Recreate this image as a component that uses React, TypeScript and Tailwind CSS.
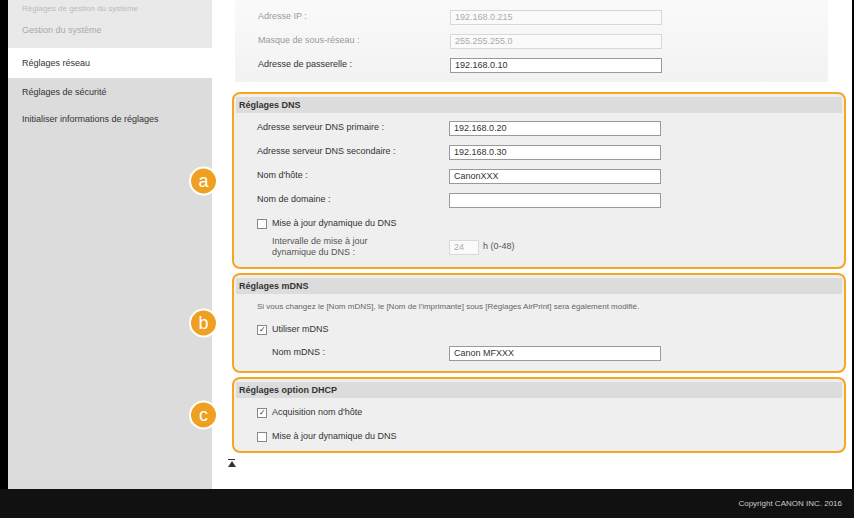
import React from 'react';

const font = { fontFamily: '"Liberation Sans", Arial, sans-serif' };

const Input = ({ value = '', disabled = false, w = 'w-[212px]' }: { value?: string; disabled?: boolean; w?: string }) => (
  <div
    className={`${w} h-[15px] border text-[9px] leading-[13px] px-1 ${
      disabled ? 'border-[#d8d8d8] bg-[#fafafa] text-[#aaa]' : 'border-[#9a9a9a] bg-white text-[#333]'
    }`}
  >
    {value}
  </div>
);

const Row = ({ label, value, disabled }: { label: string; value?: string; disabled?: boolean }) => (
  <div className="flex items-center h-[24px] pl-[23px]">
    <span className={`w-[192px] text-[9px] ${disabled ? 'text-[#999]' : 'text-[#333]'}`}>{label}</span>
    <Input value={value} disabled={disabled} />
  </div>
);

const Check = ({ checked, label }: { checked?: boolean; label: string }) => (
  <div className="flex items-center gap-[5px] h-[24px] pl-[23px] text-[9px] text-[#333]">
    <span className="w-[10px] h-[10px] border border-[#888] bg-white flex items-center justify-center text-[8px] leading-none">
      {checked ? '✓' : ''}
    </span>
    {label}
  </div>
);

const Badge = ({ letter }: { letter: string }) => (
  <div className="absolute -left-[45px] top-1/2 -translate-y-1/2 w-[29px] h-[29px] rounded-full bg-[#f0a020] border-2 border-white text-white text-[18px] flex items-center justify-center">
    {letter}
  </div>
);

const Box = ({ title, letter, children, cls }: { title: string; letter: string; children: React.ReactNode; cls: string }) => (
  <div className={`relative border-2 border-[#f5a623] rounded-[8px] bg-[#efefef] ${cls}`}>
    <Badge letter={letter} />
    <div className="mx-[2px] mt-[3px] h-[16px] bg-[#dcdcdc] text-[9px] font-bold text-[#333] px-[3px] leading-[16px]">{title}</div>
    {children}
  </div>
);

export default function App() {
  return (
    <div className="w-[854px] h-[518px] flex flex-col bg-black overflow-hidden" style={font}>
      <div className="flex h-[489px] pl-[8px] pr-[2px]">
        <div className="w-[204px] bg-[#dcdcdc] text-[9px] text-[#333]">
          <div className="bg-[#e9e9e9] pt-[3px] pb-[10px]">
            <div className="pl-[14px] text-[#bbb] text-[8px] h-[20px]">Réglages de gestion du système</div>
            <div className="pl-[14px] text-[#aaa] h-[15px] leading-[15px]">Gestion du système</div>
          </div>
          <div className="bg-white h-[30px] leading-[30px] pl-[14px]">Réglages réseau</div>
          <div className="h-[28px] leading-[28px] pl-[14px]">Réglages de sécurité</div>
          <div className="h-[26px] leading-[26px] pl-[14px]">Initialiser informations de réglages</div>
        </div>
        <div className="flex-1 bg-white pl-[20px] pr-[6px]">
          <div className="ml-[3px] w-[593px] h-[82px] bg-gradient-to-b from-[#fafafa] to-[#f2f2f2] pt-[5px]">
            <Row label="Adresse IP :" value="192.168.0.215" disabled />
            <Row label="Masque de sous-réseau :" value="255.255.255.0" disabled />
            <Row label="Adresse de passerelle :" value="192.168.0.10" />
          </div>
          <Box title="Réglages DNS" letter="a" cls="mt-[10px] h-[177px]">
            <div className="pt-[3px]">
              <Row label="Adresse serveur DNS primaire :" value="192.168.0.20" />
              <Row label="Adresse serveur DNS secondaire :" value="192.168.0.30" />
              <Row label="Nom d'hôte :" value="CanonXXX" />
              <Row label="Nom de domaine :" />
              <Check label="Mise à jour dynamique du DNS" />
              <div className="flex items-center pl-[38px] text-[9px] text-[#555]">
                <span className="w-[177px] leading-[11px]">Intervalle de mise à jour<br />dynamique du DNS :</span>
                <Input value="24" disabled w="w-[30px]" />
                <span className="ml-[4px]">h (0-48)</span>
              </div>
            </div>
          </Box>
          <Box title="Réglages mDNS" letter="b" cls="mt-[4px] h-[100px]">
            <div className="pl-[23px] text-[8px] text-[#666] h-[24px] leading-[26px]">
              Si vous changez le [Nom mDNS], le [Nom de l'imprimante] sous [Réglages AirPrint] sera également modifié.
            </div>
            <Check checked label="Utiliser mDNS" />
            <div className="flex items-center h-[22px] pl-[38px]">
              <span className="w-[177px] text-[9px] text-[#333]">Nom mDNS :</span>
              <Input value="Canon MFXXX" />
            </div>
          </Box>
          <Box title="Réglages option DHCP" letter="c" cls="mt-[4px] h-[76px]">
            <div className="pt-[3px]">
              <Check checked label="Acquisition nom d'hôte" />
              <Check label="Mise à jour dynamique du DNS" />
            </div>
          </Box>
          <div className="mt-[6px] ml-[-4px] text-[9px] text-[#333] leading-none">
            <div className="w-[7px] h-[1px] bg-[#333]" />
            <div className="w-0 h-0 border-l-[4px] border-r-[4px] border-b-[6px] border-l-transparent border-r-transparent border-b-[#333] mt-[1px]" />
          </div>
        </div>
      </div>
      <div className="flex-1 bg-[#111] flex items-center justify-end pr-[12px] text-[8px] text-[#ccc]">
        Copyright CANON INC. 2016
      </div>
    </div>
  );
}
